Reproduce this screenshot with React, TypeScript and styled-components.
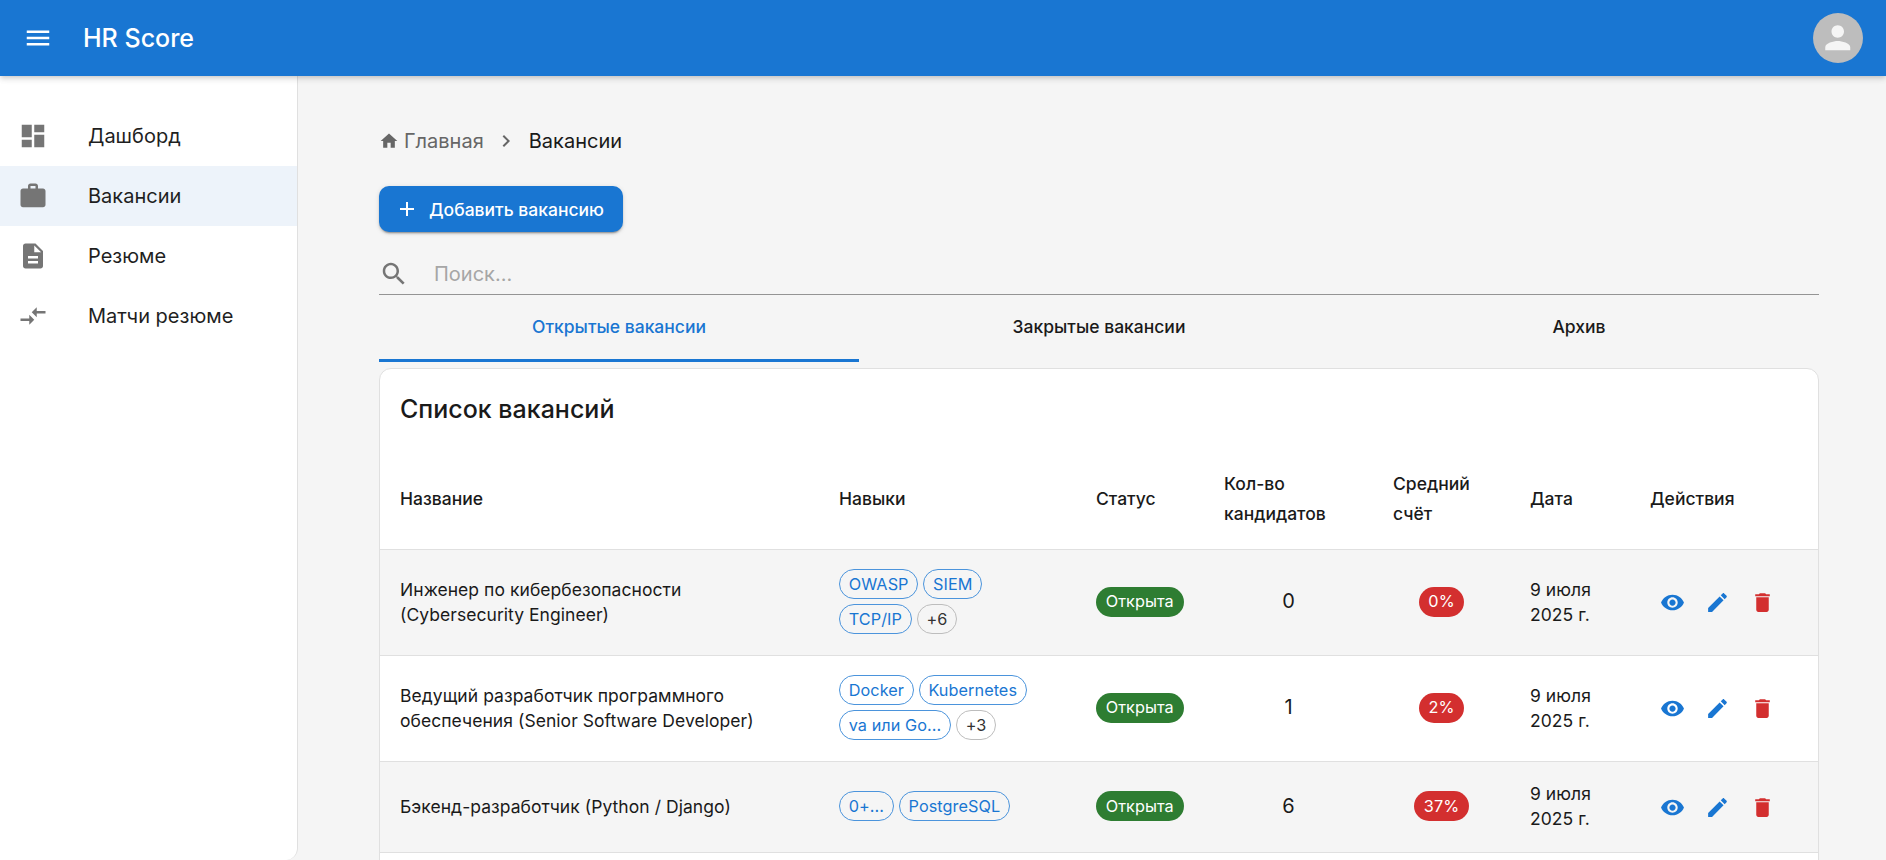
import React from "react";
import styled, { createGlobalStyle } from "styled-components";

const Global = createGlobalStyle`
  html, body { margin: 0; padding: 0; height: 100%; overflow: hidden; }
  body { font-family: Inter, "Noto Sans", sans-serif; background: #f5f5f5; color: #1a1a1a; }
  * { box-sizing: border-box; }
`;

const P = {
  menu: "M3 18h18v-2H3v2zm0-5h18v-2H3v2zm0-7v2h18V6H3z",
  dashboard: "M3 13h8V3H3v10zm0 8h8v-6H3v6zm10 0h8V11h-8v10zm0-18v6h8V3h-8z",
  work: "M20 6h-4V4c0-1.11-.89-2-2-2h-4c-1.11 0-2 .89-2 2v2H4c-1.11 0-1.99.89-1.99 2L2 19c0 1.11.89 2 2 2h16c1.11 0 2-.89 2-2V8c0-1.11-.89-2-2-2zm-6 0h-4V4h4v2z",
  description: "M14 2H6c-1.1 0-1.99.9-1.99 2L4 20c0 1.1.89 2 1.99 2H18c1.1 0 2-.9 2-2V8l-6-6zm2 16H8v-2h8v2zm0-4H8v-2h8v2zm-3-5V3.5L18.5 9H13z",
  compare: "M9.01 14H2v2h7.01v3L13 15l-3.99-4v3zm5.98-1v-3H22V8h-7.01V5L11 9l3.99 4z",
  home: "M10 20v-6h4v6h5v-8h3L12 3 2 12h3v8z",
  next: "M10 6L8.59 7.41 13.17 12l-4.58 4.59L10 18l6-6z",
  search: "M15.5 14h-.79l-.28-.27C15.41 12.59 16 11.11 16 9.5 16 5.91 13.09 3 9.5 3S3 5.91 3 9.5 5.91 16 9.5 16c1.61 0 3.09-.59 4.23-1.57l.27.28v.79l5 4.99L20.49 19l-4.99-5zm-6 0C7.01 14 5 11.99 5 9.5S7.01 5 9.5 5 14 7.01 14 9.5 11.99 14 9.5 14z",
  add: "M19 13h-6v6h-2v-6H5v-2h6V5h2v6h6v2z",
  eye: "M12 4.5C7 4.5 2.73 7.61 1 12c1.73 4.39 6 7.5 11 7.5s9.27-3.11 11-7.5c-1.73-4.39-6-7.5-11-7.5zM12 17c-2.76 0-5-2.24-5-5s2.24-5 5-5 5 2.24 5 5-2.24 5-5 5zm0-8c-1.66 0-3 1.34-3 3s1.34 3 3 3 3-1.34 3-3-1.34-3-3-3z",
  edit: "M3 17.25V21h3.75L17.81 9.94l-3.75-3.75L3 17.25zM20.71 7.04c.39-.39.39-1.02 0-1.41l-2.34-2.34c-.39-.39-1.02-.39-1.41 0l-1.83 1.83 3.75 3.75 1.83-1.83z",
  trash: "M6 19c0 1.1.9 2 2 2h8c1.1 0 2-.9 2-2V7H6v12zM19 4h-3.5l-1-1h-5l-1 1H5v2h14V4z",
  person: "M12 12c2.21 0 4-1.79 4-4s-1.79-4-4-4-4 1.79-4 4 1.79 4 4 4zm0 2c-2.67 0-8 1.34-8 4v2h16v-2c0-2.66-5.33-4-8-4z",
};

const Svg = styled.svg<{ $size: number; $color?: string }>`
  width: ${(p) => p.$size}px;
  height: ${(p) => p.$size}px;
  flex: none;
  display: block;
  fill: ${(p) => p.$color ?? "currentColor"};
`;
const Icon = ({ d, size, color }: { d: string; size: number; color?: string }) => (
  <Svg viewBox="0 0 24 24" $size={size} $color={color}><path d={d} /></Svg>
);

const Page = styled.div`
  height: 100vh;
  display: flex;
  flex-direction: column;
  overflow: hidden;
`;
const AppBar = styled.header`
  height: 76px;
  flex: none;
  background: #1976d2;
  color: #fff;
  display: flex;
  align-items: center;
  padding: 0 23px;
  position: relative;
  z-index: 2;
  box-shadow: 0 2px 4px -1px rgba(0,0,0,.12), 0 4px 5px 0 rgba(0,0,0,.07), 0 1px 10px 0 rgba(0,0,0,.06);
`;
const Brand = styled.div`
  font-size: 25px;
  line-height: 30px;
  font-weight: 500;
  margin-left: 30px;
  flex: 1;
`;
const Avatar = styled.div`
  width: 50px;
  height: 50px;
  border-radius: 50%;
  background: #bdbdbd;
  color: #f5f5f5;
  display: flex;
  align-items: center;
  justify-content: center;
`;
const Body = styled.div`
  flex: 1;
  display: flex;
  min-height: 0;
`;
const Sidebar = styled.nav`
  width: 298px;
  flex: none;
  background: #fff;
  border-right: 1px solid #e0e0e0;
  border-bottom-right-radius: 12px;
  padding-top: 30px;
`;
const NavItem = styled.div<{ $active?: boolean }>`
  height: 60px;
  display: flex;
  align-items: center;
  padding-left: 18px;
  gap: 40px;
  font-size: 20px;
  color: #1f1f1f;
  background: ${(p) => (p.$active ? "#edf3fa" : "transparent")};
  svg { fill: #757575; }
`;
const Main = styled.main`
  flex: 1;
  min-width: 0;
  padding: 50px 67px 0 81px;
  overflow: hidden;
`;
const Crumbs = styled.div`
  display: flex;
  align-items: center;
  height: 30px;
  font-size: 20px;
  color: #666;
  margin-bottom: 30px;
`;
const CrumbHome = styled.span`
  display: flex;
  align-items: center;
  gap: 5px;
`;
const CrumbSep = styled.span`
  display: flex;
  margin: 0 10.5px;
  color: #666;
`;
const CrumbNow = styled.span`
  color: #1a1a1a;
`;
const AddButton = styled.button`
  height: 46px;
  width: 244px;
  border: 0;
  border-radius: 10px;
  background: #1976d2;
  color: #fff;
  font: 500 17.5px Inter, sans-serif;
  display: flex;
  align-items: center;
  padding: 0 0 0 16px;
  gap: 10px;
  box-shadow: 0 3px 1px -2px rgba(0,0,0,.2), 0 2px 2px 0 rgba(0,0,0,.14), 0 1px 5px 0 rgba(0,0,0,.12);
`;
const SearchBar = styled.div`
  margin-top: 16px;
  height: 47px;
  border-bottom: 1px solid #949494;
  display: flex;
  align-items: center;
  padding: 6px 0 0 0;
  gap: 25px;
  color: #757575;
`;
const SearchInput = styled.input`
  flex: 1;
  border: 0;
  outline: 0;
  padding: 0;
  background: transparent;
  font: 400 20px Inter, sans-serif;
  color: #1a1a1a;
  &::placeholder { color: #a6a6a6; opacity: 1; }
`;
const Tabs = styled.div`
  display: grid;
  grid-template-columns: repeat(3, 1fr);
  height: 67px;
`;
const Tab = styled.div<{ $active?: boolean }>`
  display: flex;
  align-items: center;
  justify-content: center;
  padding-bottom: 2px;
  font-size: 17.5px;
  font-weight: 500;
  color: ${(p) => (p.$active ? "#1976d2" : "#1a1a1a")};
  border-bottom: 3px solid ${(p) => (p.$active ? "#1976d2" : "transparent")};
`;
const Card = styled.section`
  margin-top: 6px;
  background: #fff;
  border: 1px solid #e0e0e0;
  border-radius: 12px;
  overflow: hidden;
`;
const CardTitle = styled.h2`
  margin: 0;
  padding: 19px 20px 19px;
  font-size: 25px;
  line-height: 42px;
  font-weight: 500;
  color: #1a1a1a;
`;
const Table = styled.table`
  width: 100%;
  table-layout: fixed;
  border-collapse: collapse;
`;
const Col = styled.col<{ $w: number }>`
  width: ${(p) => p.$w}px;
`;
const Th = styled.th`
  padding: 20px;
  text-align: left;
  font-size: 17.5px;
  font-weight: 500;
  line-height: 30px;
  color: #1a1a1a;
  border-bottom: 1px solid #e0e0e0;
`;
const Row = styled.tr<{ $odd?: boolean }>`
  background: ${(p) => (p.$odd ? "#f5f5f5" : "#fff")};
`;
const Td = styled.td<{ $center?: boolean }>`
  padding: 19px 20px 21px;
  font-size: 17.5px;
  line-height: 25px;
  letter-spacing: 0.05px;
  font-weight: 400;
  color: #1a1a1a;
  vertical-align: middle;
  text-align: ${(p) => (p.$center ? "center" : "left")};
  border-bottom: 1px solid #e0e0e0;
`;
const CountText = styled.span`
  font-size: 20px;
`;
const Chips = styled.div`
  display: flex;
  flex-wrap: wrap;
  gap: 5px 5px;
`;
const Chip = styled.span<{ $muted?: boolean }>`
  height: 30px;
  padding: 0 8.75px;
  border-radius: 15px;
  border: 1px solid ${(p) => (p.$muted ? "#bdbdbd" : "#4b94dc")};
  color: ${(p) => (p.$muted ? "#333" : "#1976d2")};
  font-size: 16.25px;
  display: inline-flex;
  align-items: center;
  white-space: nowrap;
`;
const Badge = styled.span<{ $bg: string }>`
  display: inline-flex;
  vertical-align: top;
  align-items: center;
  height: 30px;
  padding: 0 9.75px;
  border-radius: 15px;
  background: ${(p) => p.$bg};
  color: #fff;
  font-size: 16.25px;
  font-weight: 400;
`;
const Actions = styled.div`
  display: flex;
  gap: 5px;
  margin-left: 2px;
  padding-top: 2px;
`;
const ActionBtn = styled.button<{ $color: string }>`
  width: 40px;
  height: 40px;
  border: 0;
  padding: 0;
  background: transparent;
  color: ${(p) => p.$color};
  display: flex;
  align-items: center;
  justify-content: center;
`;
const EmptyRow = styled.td`
  height: 100px;
`;

const jobs = [
  { name: ["Инженер по кибербезопасности", "(Cybersecurity Engineer)"], skills: ["OWASP", "SIEM", "TCP/IP"], more: "+6", count: 0, score: "0%" },
  { name: ["Ведущий разработчик программного", "обеспечения (Senior Software Developer)"], skills: ["Docker", "Kubernetes", "va или Go..."], more: "+3", count: 1, score: "2%" },
  { name: ["Бэкенд-разработчик (Python / Django)"], skills: ["0+...", "PostgreSQL"], more: "", count: 6, score: "37%" },
];
const nav = [
  { d: P.dashboard, label: "Дашборд" },
  { d: P.work, label: "Вакансии", active: true },
  { d: P.description, label: "Резюме" },
  { d: P.compare, label: "Матчи резюме" },
];
const heads = ["Название", "Навыки", "Статус", "Кол-во кандидатов", "Средний счёт", "Дата", "Действия"];
const widths = [439, 257, 128, 169, 137, 120, 188];

export default function App() {
  return (
    <Page>
      <Global />
      <AppBar>
        <Icon d={P.menu} size={30} />
        <Brand>HR Score</Brand>
        <Avatar><Icon d={P.person} size={37.5} /></Avatar>
      </AppBar>
      <Body>
        <Sidebar>
          {nav.map((n) => (
            <NavItem key={n.label} $active={n.active}>
              <Icon d={n.d} size={30} />
              {n.label}
            </NavItem>
          ))}
        </Sidebar>
        <Main>
          <Crumbs>
            <CrumbHome><Icon d={P.home} size={20} />Главная</CrumbHome>
            <CrumbSep><Icon d={P.next} size={24} /></CrumbSep>
            <CrumbNow>Вакансии</CrumbNow>
          </Crumbs>
          <AddButton><Icon d={P.add} size={24} />Добавить вакансию</AddButton>
          <SearchBar>
            <Icon d={P.search} size={30} />
            <SearchInput placeholder="Поиск..." />
          </SearchBar>
          <Tabs>
            <Tab $active>Открытые вакансии</Tab>
            <Tab>Закрытые вакансии</Tab>
            <Tab>Архив</Tab>
          </Tabs>
          <Card>
            <CardTitle>Список вакансий</CardTitle>
            <Table>
              <colgroup>{widths.map((w, i) => <Col key={i} $w={w} />)}</colgroup>
              <thead>
                <tr>{heads.map((h) => <Th key={h}>{h}</Th>)}</tr>
              </thead>
              <tbody>
                {jobs.map((j, i) => (
                  <Row key={i} $odd={i % 2 === 0}>
                    <Td>{j.name.map((l, k) => <React.Fragment key={k}>{k > 0 && <br />}{l}</React.Fragment>)}</Td>
                    <Td>
                      <Chips>
                        {j.skills.map((s) => <Chip key={s}>{s}</Chip>)}
                        {j.more && <Chip $muted>{j.more}</Chip>}
                      </Chips>
                    </Td>
                    <Td><Badge $bg="#2e7d32">Открыта</Badge></Td>
                    <Td $center><CountText>{j.count}</CountText></Td>
                    <Td $center><Badge $bg="#d32f2f">{j.score}</Badge></Td>
                    <Td>9 июля<br />2025 г.</Td>
                    <Td>
                      <Actions>
                        <ActionBtn $color="#1976d2"><Icon d={P.eye} size={25} /></ActionBtn>
                        <ActionBtn $color="#1976d2"><Icon d={P.edit} size={25} /></ActionBtn>
                        <ActionBtn $color="#d32f2f"><Icon d={P.trash} size={25} /></ActionBtn>
                      </Actions>
                    </Td>
                  </Row>
                ))}
                <tr><EmptyRow colSpan={7} /></tr>
              </tbody>
            </Table>
          </Card>
        </Main>
      </Body>
    </Page>
  );
}
